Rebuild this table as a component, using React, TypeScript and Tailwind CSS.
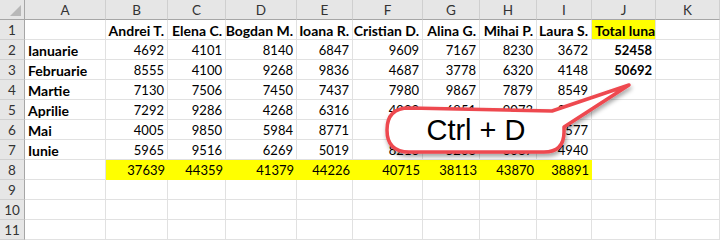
import React from 'react';

const cols = ['A', 'B', 'C', 'D', 'E', 'F', 'G', 'H', 'I', 'J', 'K'];

type Row = { label: string; vals: (number | string)[]; total?: number };

const rows: Row[] = [
  { label: 'Ianuarie', vals: [4692, 4101, 8140, 6847, 9609, 7167, 8230, 3672], total: 52458 },
  { label: 'Februarie', vals: [8555, 4100, 9268, 9836, 4687, 3778, 6320, 4148], total: 50692 },
  { label: 'Martie', vals: [7130, 7506, 7450, 7437, 7980, 9867, 7879, 8549] },
  { label: 'Aprilie', vals: [7292, 9286, 4268, 6316, 4032, 6851, 9073, 8005] },
  { label: 'Mai', vals: [4005, 9850, 5984, 8771, 6191, 5247, 6281, 9577] },
  { label: 'Iunie', vals: [5965, 9516, 6269, 5019, 8216, 5203, 6087, 4940] },
];

const names = ['Andrei T.', 'Elena C.', 'Bogdan M.', 'Ioana R.', 'Cristian D.', 'Alina G.', 'Mihai P.', 'Laura S.'];
const sums = [37639, 44359, 41379, 44226, 40715, 38113, 43870, 38891];

const cell = 'border-r border-b border-[#e1e1e1] flex items-center px-[3px] pt-[2px] whitespace-nowrap overflow-visible';
const rowHead = 'bg-[#e6e6e6] border-b border-[#d0d0d0] border-r border-r-[#a6a6a6] flex items-center justify-center pt-[2px] text-[13.5px] text-[#333]';
const colHead = 'bg-[#e6e6e6] border-r border-[#cfcfcf] border-b border-b-[#a6a6a6] flex items-center justify-center pt-[1px] text-[13.5px] text-[#333]';

function Empty() {
  return <div className={cell} />;
}

export default function App() {
  return (
    <div className="relative w-[720px] h-[241px] bg-white overflow-hidden" style={{ fontFamily: 'Lato, "Open Sans", sans-serif' }}>
      <div className="grid grid-cols-[25px_81px_62px_58px_71px_56px_70px_57px_57px_55px_64px_64px] auto-rows-[20px] text-[13px] text-black">
        {/* corner */}
        <div className="bg-[#e6e6e6] border-r border-b border-[#a6a6a6] relative">
          <div className="absolute right-[3px] bottom-[3px] w-0 h-0 border-l-[11px] border-l-transparent border-b-[11px] border-b-[#b8b8b8]" />
        </div>
        {cols.map((c) => (
          <div key={c} className={colHead}>{c}</div>
        ))}

        {/* row 1 */}
        <div className={rowHead}>1</div>
        <Empty />
        {names.map((n) => (
          <div key={n} className={cell + ' justify-end font-bold text-[14px]'}>{n}</div>
        ))}
        <div className="bg-[#ffff00] border-r border-b border-[#e1e1e1] flex items-center px-[3px] pt-[2px] font-bold text-[14px] whitespace-nowrap">Total luna</div>
        <Empty />

        {rows.map((r, i) => (
          <React.Fragment key={r.label}>
            <div className={rowHead}>{i + 2}</div>
            <div className={cell + ' font-bold text-[14px]'}>{r.label}</div>
            {r.vals.map((v, j) => (
              <div key={j} className={cell + ' justify-end'}>{v}</div>
            ))}
            <div className={cell + ' justify-end font-bold'}>{r.total ?? ''}</div>
            <Empty />
          </React.Fragment>
        ))}

        {/* row 8 */}
        <div className={rowHead}>8</div>
        <Empty />
        {sums.map((s, j) => (
          <div key={j} className="bg-[#ffff00] border-b border-[#ffff00] flex items-center justify-end px-[3px] pt-[2px]">{s}</div>
        ))}
        <Empty />
        <Empty />

        {[9, 10, 11].map((n) => (
          <React.Fragment key={n}>
            <div className={rowHead}>{n}</div>
            {cols.map((c) => (
              <Empty key={c} />
            ))}
          </React.Fragment>
        ))}
      </div>

      {/* callout */}
      <svg className="absolute left-0 top-0 pointer-events-none" width="720" height="241" viewBox="0 0 720 241">
        <defs>
          <filter id="sh" x="-20%" y="-40%" width="140%" height="180%">
            <feDropShadow dx="1" dy="3" stdDeviation="2" floodColor="#000" floodOpacity="0.35" />
          </filter>
        </defs>
        <path
          d="M 409 108 L 552 111 L 629 85 L 564 127 L 564 132 Q 564 152 544 152 L 409 152 Q 387 152 387 130 Q 387 108 409 108 Z"
          fill="#ffffff"
          stroke="#ee4850"
          strokeWidth="3.5"
          strokeLinejoin="round"
          filter="url(#sh)"
        />
      </svg>
      <div
        className="absolute left-[387px] top-[108px] w-[178px] h-[44px] flex items-center justify-center text-[29px] text-black pt-[1px]"
        style={{ fontFamily: '"Liberation Sans", Arial, sans-serif' }}
      >
        Ctrl + D
      </div>
    </div>
  );
}
